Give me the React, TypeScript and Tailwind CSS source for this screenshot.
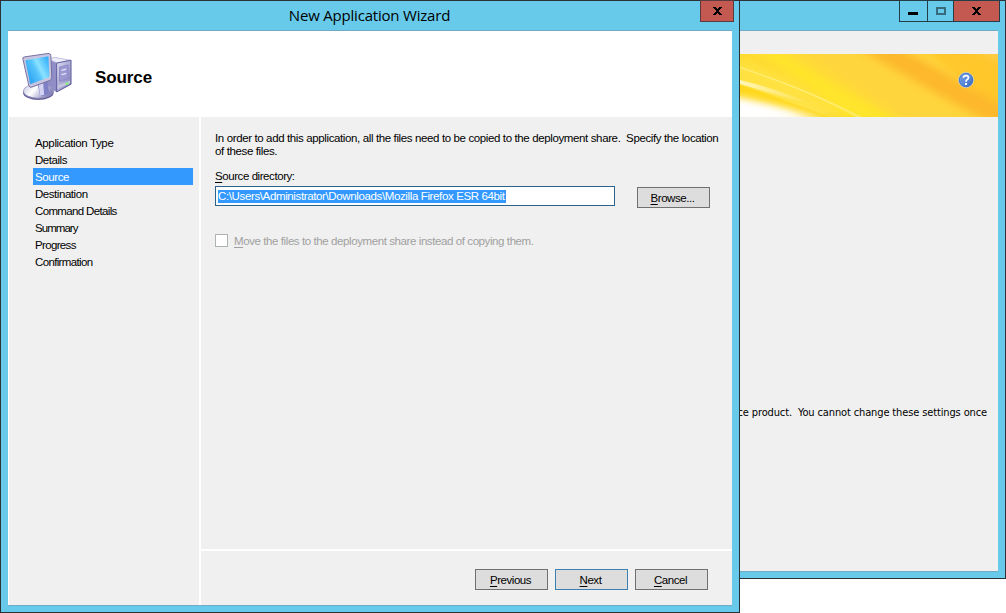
import React from "react";

const steps = [
  { label: "Application Type", track: "tracking-[-0.36px]" },
  { label: "Details", track: "tracking-[-0.45px]" },
  { label: "Source", track: "tracking-[-0.4px]", active: true },
  { label: "Destination", track: "tracking-[-0.45px]" },
  { label: "Command Details", track: "tracking-[-0.65px]" },
  { label: "Summary", track: "tracking-[-0.95px]" },
  { label: "Progress", track: "tracking-[-0.65px]" },
  { label: "Confirmation", track: "tracking-[-0.65px]" },
];

function Mnemonic({ text }: { text: string }) {
  return (
    <>
      <span className="underline decoration-1 underline-offset-2 [text-decoration-skip-ink:none]">{text[0]}</span>
      {text.slice(1)}
    </>
  );
}

function WizardButton({ text, primary }: { text: string; primary?: boolean }) {
  return (
    <button
      className={`flex h-[21px] w-[73px] shrink-0 items-center justify-center border bg-[#dddddd] pt-[2px] pr-[2px] ${
        primary ? "border-[#3c7fb1]" : "border-[#707070]"
      }`}
    >
      <span className="tracking-[-0.45px] whitespace-nowrap">
        <Mnemonic text={text} />
      </span>
    </button>
  );
}

function CloseGlyph() {
  return (
    <svg width="9" height="8" viewBox="0 0 9 8" shapeRendering="crispEdges">
      <path d="M0 0h3v1H0zM6 0h3v1H6zM1 1h3v1H1zM5 1h3v1H5zM2 2h5v1H2zM3 3h3v2H3zM2 5h5v1H2zM1 6h3v1H1zM5 6h3v1H5zM0 7h3v1H0zM6 7h3v1H6z" />
    </svg>
  );
}

function ComputerIcon() {
  return (
    <svg width="50" height="50" viewBox="0 0 52 51">
      <defs>
        <linearGradient id="screen" x1="0" y1="0.8" x2="1" y2="0.2">
          <stop offset="0" stopColor="#249bf0" />
          <stop offset="0.45" stopColor="#56c4fc" />
          <stop offset="0.62" stopColor="#8ae2ff" />
          <stop offset="1" stopColor="#38b0fa" />
        </linearGradient>
        <linearGradient id="tower" x1="0" y1="0" x2="1" y2="1">
          <stop offset="0" stopColor="#dedff6" />
          <stop offset="1" stopColor="#7777b5" />
        </linearGradient>
        <linearGradient id="stand" x1="0" y1="0" x2="1" y2="0.4">
          <stop offset="0" stopColor="#c4c2df" />
          <stop offset="0.45" stopColor="#ffffff" />
          <stop offset="1" stopColor="#8682bd" />
        </linearGradient>
      </defs>
      <path d="M27 6 34 4l16 3-13 3z" fill="#ececfb" stroke="#a8a8d6" strokeWidth=".7" />
      <path d="M27 6l9 4v30l-9-4z" fill="#8f8ec6" />
      <path d="M36 10l15-3v25l-15 8z" fill="url(#tower)" stroke="#5d5998" strokeWidth="1" />
      <path d="M39 14l9-2v14l-9 3z" fill="#9a99d2" stroke="#7a78b8" strokeWidth=".6" />
      <path d="M41 17.500l5-1.200M41 22l5-1.200" stroke="#e4e4fb" strokeWidth="1.300" fill="none" />
      <path d="M37 33l13-5v3l-13 6z" fill="#c3c4dc" />
      <circle cx="47" cy="31.500" r="1.500" fill="#83ed7b" />
      <ellipse cx="17" cy="40.500" rx="16" ry="8" fill="#68639c" />
      <ellipse cx="17" cy="39" rx="15.500" ry="7.500" fill="url(#stand)" stroke="#9793bd" strokeWidth=".7" />
      <path d="M16 31l11-3 1 14q-5 3-9 2z" fill="#8080c4" />
      <path d="M17 31l5-1 1 13-4 1z" fill="#d4d4f2" />
      <path d="M1 6Q0 4 3 3.500L27 0q3 0 3 2l1 23q0 2-2 3L10 35q-2 1-3-2z" fill="#c7c5df" stroke="#716d9e" strokeWidth="1" />
      <path d="M3.500 7 27.500 3 28.500 24.500 8.500 32z" fill="url(#screen)" />
    </svg>
  );
}

function HelpIcon() {
  return (
    <svg width="16" height="16" viewBox="0 0 16 16">
      <defs>
        <linearGradient id="help" x1="0" y1="0" x2="1" y2="1">
          <stop offset="0" stopColor="#79a2e2" />
          <stop offset="0.5" stopColor="#5b8cdb" />
          <stop offset="1" stopColor="#3465b4" />
        </linearGradient>
      </defs>
      <circle cx="8" cy="8" r="7.500" fill="url(#help)" stroke="#d9ddd5" strokeWidth=".8" />
      <circle cx="8" cy="8" r="6.800" fill="none" stroke="#376bbe" strokeWidth=".7" />
      <path d="M5.500 5.800Q5.500 3.600 8 3.600t2.500 2Q10.500 7 9 7.700 8 8.200 8 9.700" fill="none" stroke="#fff" strokeWidth="1.700" />
      <path d="M7 10.900h2v2H7z" fill="#fff" />
    </svg>
  );
}

function Banner() {
  return (
    <svg className="absolute inset-0" width="258" height="63" viewBox="0 0 258 63" preserveAspectRatio="none">
      <defs>
        <linearGradient id="gold" x1="0" y1="63" x2="85" y2="-80" gradientUnits="userSpaceOnUse">
          <stop offset="0" stopColor="#ffd61b" />
          <stop offset="0.25" stopColor="#ffdc2c" />
          <stop offset="0.5" stopColor="#ffda39" />
          <stop offset="1" stopColor="#ffcd2e" />
        </linearGradient>
        <linearGradient id="streak" x1="0" x2="1">
          <stop offset="0" stopColor="#fff08a" />
          <stop offset="1" stopColor="#ffe95c" />
        </linearGradient>
        <linearGradient id="flare" x1="0" x2="1">
          <stop offset="0" stopColor="#fff6b8" />
          <stop offset="1" stopColor="#ffdf3a" />
        </linearGradient>
        <filter id="soft" x="-20%" y="-30%" width="140%" height="160%">
          <feGaussianBlur stdDeviation="4" />
        </filter>
        <filter id="fine" x="-10%" y="-30%" width="120%" height="160%">
          <feGaussianBlur stdDeviation=".7" />
        </filter>
      </defs>
      <path d="M0 0h258v63H0z" fill="url(#gold)" />
      <path d="M-8 5Q50 20 110 60L60 64Q30 40-8 30z" fill="#ffe242" filter="url(#soft)" />
      <path d="M10-8Q70 30 120 75h55Q90 30 32-8z" fill="#ffe52a" filter="url(#soft)" />
      <path d="M50-12 180 75h90V-12z" fill="#ffd53d" filter="url(#soft)" />
      <path d="M180-10h90v80z" fill="#ffc72a" filter="url(#soft)" />
      <path d="M118-6h42L272 56v24Q220 54 175 27z" fill="#fdb82a" filter="url(#soft)" />
      <path d="M225-8h45v20z" fill="#ffcc4b" filter="url(#soft)" />
      <path d="M0 31Q50 48 90 63H60Q25 46 0 42z" fill="#ffd81a" filter="url(#fine)" />
      <path d="M-8 43Q42 52 88 68H-8z" fill="#fff" filter="url(#soft)" />
      <path d="M-5 47Q35 55 65 66H-5z" fill="#fff" filter="url(#soft)" />
      <path d="M0 26Q45 37 76 52 40 42 0 30z" fill="url(#flare)" filter="url(#fine)" />
      <path d="M0 13Q73 37 122 63h-6Q67 36 0 14z" fill="url(#streak)" filter="url(#fine)" />
    </svg>
  );
}

function BackWindow() {
  return (
    <div className="absolute top-0 right-0 flex h-[579px] w-[274px] flex-col border border-[#2c3136] bg-[#67caea] pr-[7px] pb-[6px]">
      <div className="-mr-[2px] flex h-[29px] shrink-0 items-start justify-end">
        <div className="-mt-px flex h-[22px] w-[101px] border border-[#243e49]">
          <div className="flex w-[27px] items-center justify-center">
            <div className="mt-[5px] -ml-px h-[3px] w-[10px] bg-black" />
          </div>
          <div className="flex w-[27px] items-center justify-center border-x border-[#243e49]">
            <div className="h-[8px] w-[10px] border-2 border-[#386a7b]" />
          </div>
          <div className="flex flex-1 items-center justify-center bg-[#c45951]">
            <CloseGlyph />
          </div>
        </div>
      </div>
      <div className="flex flex-1 flex-col border-y border-[#70adc5] bg-[#f0f0f0]">
        <div className="h-[23px] shrink-0" />
        <div className="relative ml-[7px] flex h-[63px] shrink-0 items-center justify-end overflow-hidden bg-[#ffd633] pr-[24px]">
          <Banner />
          <div className="relative mt-[-11px]">
            <HelpIcon />
          </div>
        </div>
        <div className="mt-[288px] flex justify-end pr-[11px] font-['DejaVu_Sans_Condensed','DejaVu_Sans',sans-serif] text-[11px] leading-[16px] tracking-[-0.13px] whitespace-pre">
          ce product.  You cannot change these settings once
        </div>
      </div>
    </div>
  );
}

export default function App() {
  return (
    <div className="relative h-[613px] w-[1006px] overflow-hidden bg-white font-['Liberation_Sans',Arial,sans-serif] text-[11.5px] text-black">
      <BackWindow />
      <div className="absolute top-0 left-0 flex h-[613px] w-[740px] flex-col border border-[#2c3136] bg-[#67caea] px-[7px] pb-[6px]">
        <div className="flex h-[29px] shrink-0 items-start">
          <div className="w-[31px] shrink-0" />
          <div className="flex-1 pt-[4px] text-center font-['Open_Sans','Noto_Sans',sans-serif] text-[15px] leading-[21px] tracking-[-0.2px] whitespace-nowrap">
            New Application Wizard
          </div>
          <div className="-mt-px -mr-[2px] flex h-[22px] w-[34px] shrink-0 items-center justify-center border border-[#5b3b40] bg-[#c45951]">
            <CloseGlyph />
          </div>
        </div>
        <div className="flex flex-1 flex-col border-y border-[#70adc5] bg-white">
          <header className="flex h-[86px] shrink-0 items-start">
            <div className="mt-[22px] ml-[14px]">
              <ComputerIcon />
            </div>
            <h1 className="mt-[36px] ml-[23px] font-['Liberation_Sans',Arial,sans-serif] text-[17px] leading-[22px] font-bold tracking-[-0.1px]">
              Source
            </h1>
          </header>
          <div className="flex flex-1 gap-[2px] pl-px">
            <nav className="w-[190px] shrink-0 bg-[#f0f0f0] pt-[17px] pl-[24px]">
              {steps.map((s) => (
                <div
                  key={s.label}
                  className={`h-[17px] w-[160px] pl-[2px] leading-[18px] whitespace-nowrap ${s.track} ${
                    s.active ? "bg-[#3399ff] text-white" : ""
                  }`}
                >
                  {s.label}
                </div>
              ))}
            </nav>
            <div className="flex min-w-0 flex-1 flex-col gap-[2px]">
              <main className="h-[432px] shrink-0 bg-[#f0f0f0] pt-[15px] pl-[14px]">
                <p className="leading-[13px] tracking-[-0.375px] whitespace-pre">
                  {"In order to add this application, all the files need to be copied to the deployment share.  Specify the location\nof these files."}
                </p>
                <div className="mt-[10px] leading-[16px] tracking-[-0.43px]">
                  <Mnemonic text="Source directory:" />
                </div>
                <div className="mt-[2px] flex gap-[22px]">
                  <div className="flex h-[20px] w-[400px] items-center border border-[#2c628b] bg-white pl-[2px]">
                    <span className="h-[13px] bg-[#3399ff] pr-px leading-[13px] tracking-[-0.37px] whitespace-nowrap text-white">
                      C:\Users\Administrator\Downloads\Mozilla Firefox ESR 64bit
                    </span>
                  </div>
                  <div className="mt-px">
                    <WizardButton text="Browse..." />
                  </div>
                </div>
                <label className="mt-[26px] flex items-start gap-[6px] text-[#a0a0a0]">
                  <span className="h-[13px] w-[13px] border border-[#adb2b5] bg-white" />
                  <span className="leading-[15px] tracking-[-0.41px] whitespace-nowrap">
                    <Mnemonic text="Move the files to the deployment share instead of copying them." />
                  </span>
                </label>
              </main>
              <footer className="flex flex-1 justify-end gap-[7px] bg-[#f0f0f0] pt-[18px] pr-[24px]">
                <WizardButton text="Previous" />
                <WizardButton text="Next" primary />
                <WizardButton text="Cancel" />
              </footer>
            </div>
          </div>
        </div>
      </div>
    </div>
  );
}
